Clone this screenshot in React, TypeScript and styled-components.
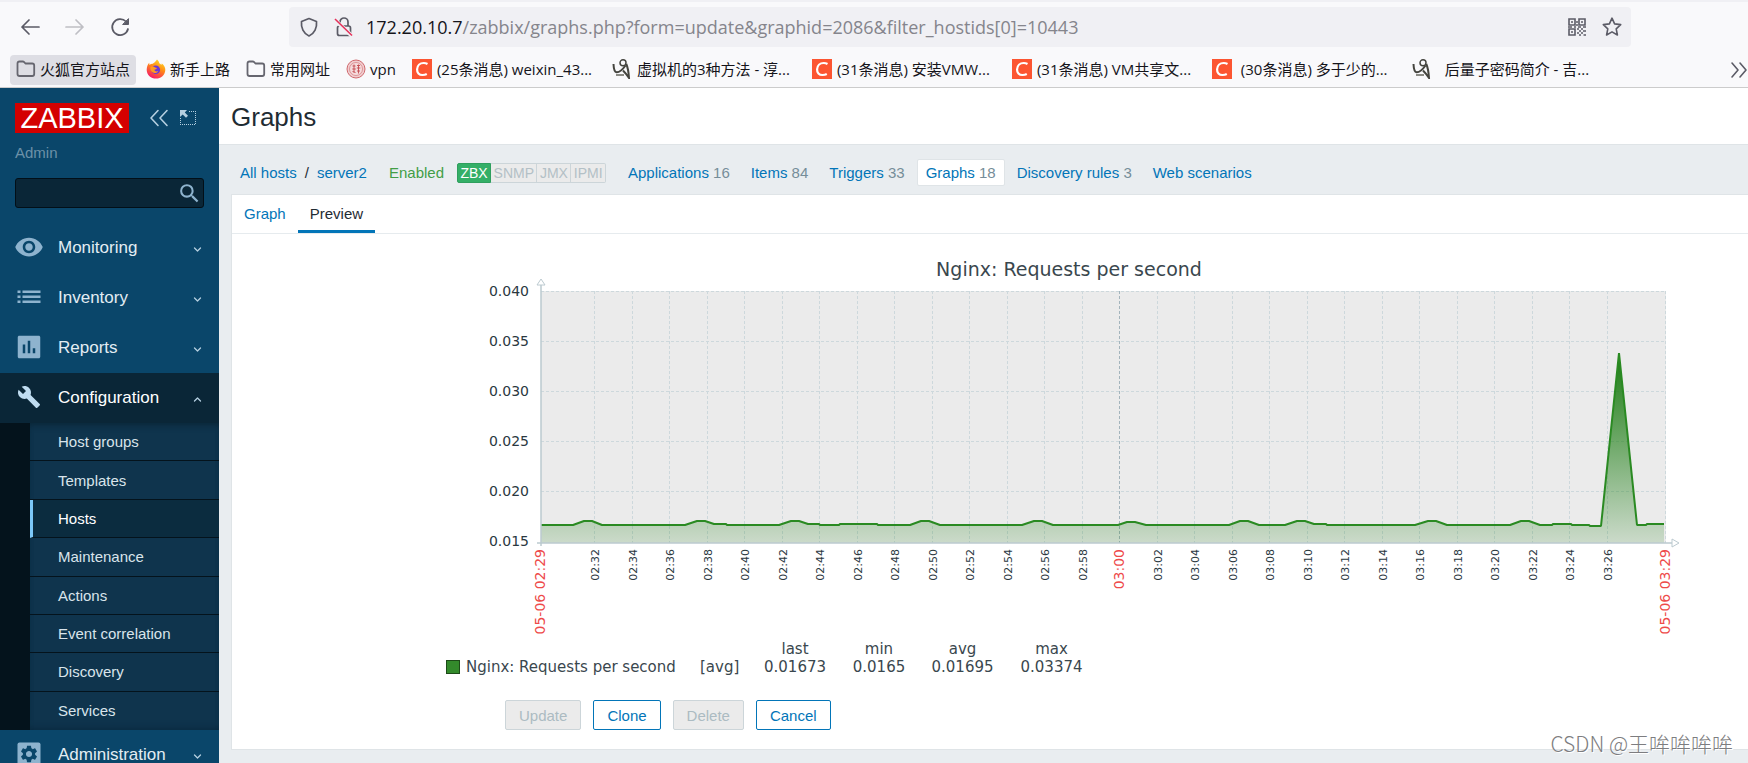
import React from 'react';
import styled, { createGlobalStyle, css } from 'styled-components';

const GlobalStyle = createGlobalStyle`
  *, *::before, *::after { box-sizing: border-box; }
  html, body { margin: 0; padding: 0; }
  body {
    font-family: "Liberation Sans", "Noto Sans CJK SC", sans-serif;
    font-size: 15px;
    color: #1f2c33;
    background: #e9edf0;
    overflow: hidden;
  }
  ul { list-style: none; margin: 0; padding: 0; }
  a { text-decoration: none; color: inherit; }
  button, input { font: inherit; }
  svg { display: block; flex: none; }
`;

const Window = styled.div`
  position: relative;
  height: 100vh;
  display: flex;
  flex-direction: column;
`;

/* ---------- browser chrome ---------- */

const Chrome = styled.header`
  flex: none;
  background: #f9f9fb;
  border-top: 2px solid #f0f0f4;
  border-bottom: 1px solid #ccc;
  font-family: "Open Sans", "Noto Sans CJK SC", sans-serif;
  color: #15141a;
`;

const Toolbar = styled.div`
  display: flex;
  align-items: center;
  padding: 5px 117px 8px 8px;
`;

const NavButtons = styled.div`
  display: flex;
  width: 281px;
  flex: none;
`;

const IconButton = styled.button<{ $faded?: boolean }>`
  display: flex;
  align-items: center;
  justify-content: center;
  width: 45px;
  height: 40px;
  padding: 0 2px 0 0;
  border: 0;
  background: none;
  color: ${(p) => (p.$faded ? '#bfbfc4' : '#5b5b66')};
`;

const UrlBar = styled.div`
  flex: 1;
  display: flex;
  align-items: center;
  height: 40px;
  padding: 0 9px 0 10px;
  border-radius: 4px;
  background: #f0f0f4;
  color: #5b5b66;
`;

const UrlText = styled.div`
  flex: 1;
  margin-left: 12px;
  font-size: 18px;
  line-height: 24px;
  white-space: nowrap;
  color: #85858c;
  b { font-weight: 400; color: #15141a; }
`;

const UrlIcons = styled.div<{ $gap: number }>`
  display: flex;
  align-items: center;
  gap: ${(p) => p.$gap}px;
`;

const Bookmarks = styled.nav`
  display: flex;
  align-items: center;
  gap: 4px;
  padding: 0 0 2px 10px;
`;

const Bookmark = styled.a<{ $active?: boolean; $wide?: boolean }>`
  display: flex;
  align-items: center;
  gap: 4px;
  flex: none;
  height: 30px;
  padding: 0 6px 2px;
  border-radius: 4px;
  font-size: 15px;
  line-height: 20px;
  white-space: pre;
  background: ${(p) => (p.$active ? '#dedee4' : 'transparent')};
  ${(p) => p.$wide && css`
    width: 196px;
    gap: 5px;
  `}
`;

const MoreBookmarks = styled.button`
  display: flex;
  margin-left: auto;
  padding: 0;
  border: 0;
  background: none;
  color: #5b5b66;
`;

const Csdn = styled.span`
  display: flex;
  align-items: center;
  justify-content: center;
  width: 20px;
  height: 20px;
  background: #fc5531;
`;

const Line = ({ d, w = 20, h = 20, sw = 2 }: { d: string; w?: number; h?: number; sw?: number }) => (
  <svg width={w} height={h} viewBox={`0 0 ${w} ${h}`} fill="none" stroke="currentColor" strokeWidth={sw} strokeLinecap="round" strokeLinejoin="round">
    <path d={d} />
  </svg>
);

const FolderIcon = () => (
  <svg width="20" height="20" viewBox="0 0 20 20" fill="none" stroke="#66666f" strokeWidth="1.8" strokeLinejoin="round">
    <path d="M1.5 15V4.5q0-2 2-2h3.2q.9 0 1.5.7l1.2 1.3h6.8q2 0 2 2V15q0 2-2 2h-12.700q-2 0-2-2z" />
  </svg>
);

const FirefoxIcon = () => (
  <svg width="20" height="20" viewBox="0 0 20 20">
    <defs>
      <linearGradient id="fox" x1="0.8" y1="0" x2="0.3" y2="1">
        <stop offset="0" stopColor="#ffe226" />
        <stop offset="0.45" stopColor="#ff8a16" />
        <stop offset="1" stopColor="#f5156c" />
      </linearGradient>
    </defs>
    <path d="M11 .5c1.500 1.200 2 2.500 2.300 3.800.8.300 1.500.900 2 1.700l.500-1.600C18 6 19.500 8.500 19.300 11c-.2 5-4.300 8.600-9.300 8.600S.8 16 .7 11C.7 8.300 1.500 5.500 3.200 3.800l.3 2.200c.8-.8 1.900-1.200 3.200-1.200C8 4 9.500 2.800 11 .5z" fill="url(#fox)" />
    <circle cx="9.800" cy="10.800" r="4.300" fill="#6a37d8" />
    <path d="M4.500 8c2-.9 3.500-.3 4.600.600L11 9c-.3 1.200-2 1.300-2.500 1.800-.1 1.500 2 2.200 3.800 1.200-1 2-3 2.500-4.800 1.700C5 12.800 4 10.500 4.500 8z" fill="#ff9a1f" />
  </svg>
);

const SealIcon = () => (
  <svg width="20" height="20" viewBox="0 0 20 20" fill="none" stroke="#d0696e">
    <circle cx="10" cy="10" r="9" strokeWidth="1" fill="#f0cdcf" />
    <circle cx="10" cy="10" r="6.500" strokeWidth=".6" fill="#f5dcdd" />
    <path d="M6.500 7h3M8 5.500v8M6.300 10h3.500M11 6.500h3M12.500 5.500v9M10.800 9h3.500M11 12h3M6.500 12.500l3 1" stroke="#c4484e" strokeWidth=".9" />
  </svg>
);

const CIcon = () => (
  <Csdn>
    <svg width="20" height="20" viewBox="0 0 20 20" fill="none" stroke="#fff" strokeWidth="2.200">
      <path d="M15.500 5c-1.200-.7-2.500-1-3.800-1C7.900 4 5.300 6.800 5.100 10.200c-.2 3.500 2 5.800 5.400 5.800 1.500 0 3-.3 4.300-1" />
    </svg>
  </Csdn>
);

const FigureIcon = () => (
  <svg width="20" height="20" viewBox="0 0 20 20" fill="none" stroke="#45453f">
    <circle cx="11" cy="3.800" r="3" strokeWidth="1.500" />
    <path d="M1.500 5c.2 5 1 8 3 8.300 3 .2 6-2.500 9-6.800" strokeWidth="2" />
    <path d="M14.300 5c1.300 3 2.300 8 2.700 14-2-3-4-5.500-6-7.500" strokeWidth="2" />
    <path d="M4 16h8" strokeWidth="2" stroke="#8b8b85" />
  </svg>
);

const QrIcon = () => (
  <svg width="18" height="18" viewBox="0 0 18 18" fill="none" stroke="#5b5b66" strokeWidth="1.600">
    <path d="M1 1h6v6H1zM11 1h6v6h-6zM1 11h6v6H1z" />
    <path d="M3 4h2M13 4h2M3 14h2M8 4h2M8 7h2M0 9h4M6 9h2M10 9h3M15 9h3M9 11h2M13 11h2M11 13h2M15 13h3M9 15h2M13 15h2M11 17h2M15.500 17h2.500" strokeWidth="1.700" />
  </svg>
);

const bookmarks: { icon: React.ReactNode; text: string; active?: boolean; wide?: boolean }[] = [
  { icon: <FolderIcon />, text: '火狐官方站点', active: true },
  { icon: <FirefoxIcon />, text: '新手上路' },
  { icon: <FolderIcon />, text: '常用网址' },
  { icon: <SealIcon />, text: 'vpn' },
  { icon: <CIcon />, text: '(25条消息) weixin_43...', wide: true },
  { icon: <FigureIcon />, text: '虚拟机的3种方法 - 淳...', wide: true },
  { icon: <CIcon />, text: '(31条消息) 安装VMW...', wide: true },
  { icon: <CIcon />, text: '(31条消息) VM共享文...', wide: true },
  { icon: <CIcon />, text: ' (30条消息) 多于少的...', wide: true },
  { icon: <FigureIcon />, text: '  后量子密码简介 - 吉...', wide: true },
];

/* ---------- sidebar ---------- */

const Workspace = styled.div`
  flex: 1;
  min-height: 0;
  display: flex;
  overflow: hidden;
`;

const Sidebar = styled.aside`
  flex: none;
  width: 219px;
  background: #0a466a;
  color: #e3edf3;
`;

const Brand = styled.div`
  display: flex;
  align-items: center;
  padding: 15px 0 0 15px;
`;

const Logo = styled.a`
  flex: none;
  width: 114px;
  height: 30px;
  margin-right: 20px;
  background: #d40000;
  color: #fff;
  font-size: 29px;
  line-height: 31px;
  text-align: center;
`;

const BrandButton = styled.button`
  display: flex;
  justify-content: center;
  width: 20px;
  margin-right: 9px;
  padding: 0;
  border: 0;
  background: none;
  color: #b5cfe0;
`;

const UserName = styled.div`
  padding: 10px 15px 0;
  line-height: 20px;
  color: #6c91a8;
`;

const SearchBox = styled.form`
  display: flex;
  align-items: center;
  height: 30px;
  margin: 15px 15px 15px;
  padding-right: 1px;
  border: 1px solid #020f18;
  border-radius: 3px;
  background: #0a2637;
  input {
    flex: 1;
    min-width: 0;
    height: 28px;
    padding: 0 6px;
    border: 0;
    outline: 0;
    background: none;
    color: #fff;
  }
  button {
    padding: 0;
    border: 0;
    background: none;
    color: #8eb3ce;
  }
`;

const MenuLink = styled.a<{ $open?: boolean }>`
  display: flex;
  align-items: center;
  height: 50px;
  padding-right: 17px;
  font-size: 17px;
  color: ${(p) => (p.$open ? '#fff' : '#e3edf3')};
  background: ${(p) => (p.$open ? '#0a2637' : 'transparent')};
`;

const MenuIcon = styled.span<{ $open?: boolean }>`
  display: flex;
  justify-content: center;
  width: 58px;
  padding-bottom: 3px;
  color: ${(p) => (p.$open ? '#bfdcf0' : '#8eb3ce')};
`;

const MenuLabel = styled.span`
  flex: 1;
`;

const Caret = styled.span`
  display: flex;
  padding-top: 3px;
  color: #b5cfe0;
`;

const Submenu = styled.ul`
  display: grid;
  grid-auto-rows: 1fr;
  height: 307px;
  border-left: 30px solid #04131c;
  background: #0f344d;
  box-shadow: inset 0 6px 6px -4px #0a2637, inset 0 -6px 6px -4px #0a2a40;
`;

const SubmenuItem = styled.li<{ $current?: boolean }>`
  display: flex;
  align-items: center;
  padding-left: ${(p) => (p.$current ? 25 : 28)}px;
  border-left: ${(p) => (p.$current ? '3px solid #7cc8f8' : '0')};
  background: ${(p) => (p.$current ? '#0b2c3f' : 'transparent')};
  color: ${(p) => (p.$current ? '#fff' : '#d9e4eb')};
  &:not(:last-child) { border-bottom: 1px solid #04131c; }
`;

const Fill = ({ d, size, vb = '0 0 24 24' }: { d: string; size: number; vb?: string }) => (
  <svg width={size} height={size} viewBox={vb} fill="currentColor">
    <path d={d} />
  </svg>
);

const GEAR =
  'M19.140 12.940c.04-.3.060-.61.060-.94 0-.32-.02-.64-.070-.94l2.030-1.580c.18-.14.230-.41.120-.61l-1.920-3.320c-.12-.22-.37-.29-.59-.22l-2.390.96c-.5-.38-1.030-.7-1.620-.94l-.36-2.540c-.04-.24-.24-.41-.48-.41h-3.840c-.24 0-.43.17-.47.41l-.36 2.540c-.59.24-1.130.57-1.620.94l-2.390-.96c-.22-.08-.47 0-.59.22L2.740 8.870c-.12.210-.080.47.120.61l2.030 1.580c-.050.3-.090.63-.090.94s.020.64.070.94l-2.030 1.580c-.18.14-.23.41-.12.61l1.920 3.320c.12.220.37.290.59.220l2.390-.96c.5.38 1.030.7 1.620.94l.36 2.540c.050.240.240.410.480.410h3.840c.240 0 .440-.170.470-.410l.360-2.540c.590-.240 1.130-.560 1.620-.940l2.390.960c.220.080.470 0 .590-.220l1.920-3.320c.120-.220.070-.470-.120-.610l-2.010-1.580zM12 15.600c-1.980 0-3.600-1.620-3.600-3.600s1.620-3.600 3.600-3.600 3.600 1.620 3.600 3.600-1.620 3.600-3.600 3.600z';

const menuTop = [
  {
    label: 'Monitoring',
    icon: <Fill size={30} d="M12 4.500C7 4.500 2.730 7.610 1 12c1.730 4.390 6 7.500 11 7.500s9.270-3.110 11-7.500c-1.730-4.390-6-7.500-11-7.500zM12 17c-2.760 0-5-2.240-5-5s2.240-5 5-5 5 2.240 5 5-2.240 5-5 5zm0-8c-1.660 0-3 1.340-3 3s1.340 3 3 3 3-1.340 3-3-1.340-3-3-3z" />,
  },
  {
    label: 'Inventory',
    icon: <Fill size={24} d="M.500 5.500h3v2.500h-3zM5.500 5.500h18v2.500h-18zM.500 10.500h3v2.500h-3zM5.500 10.500h18v2.500h-18zM.500 15.500h3v2.500h-3zM5.500 15.500h18v2.500h-18z" />,
  },
  {
    label: 'Reports',
    icon: <Fill size={30} d="M19.800 3H4.200C3.500 3 3 3.500 3 4.200v15.600c0 .7.500 1.200 1.200 1.200h15.600c.7 0 1.200-.5 1.200-1.200V4.200c0-.7-.5-1.200-1.200-1.200zM9 17H7v-7h2v7zm4 0h-2V7h2v10zm4 0h-2v-4h2v4z" />,
  },
];

const submenu = ['Host groups', 'Templates', 'Hosts', 'Maintenance', 'Actions', 'Event correlation', 'Discovery', 'Services'];

const Down = () => <Caret><Line d="M1.500 3 4.500 6 7.500 3" w={9} h={9} sw={1.300} /></Caret>;
const Up = () => <Caret><Line d="M1.500 6 4.500 3 7.500 6" w={9} h={9} sw={1.300} /></Caret>;

/* ---------- main area ---------- */

const Main = styled.main`
  flex: 1;
  min-width: 0;
`;

const PageTitle = styled.h1`
  margin: 0;
  height: 57px;
  padding-left: 12px;
  border-bottom: 1px solid #dfe4e7;
  background: #fff;
  font-size: 26px;
  font-weight: 400;
  line-height: 59px;
`;

const HostNav = styled.nav`
  display: flex;
  align-items: center;
  height: 49px;
  padding: 6px 0 0 21px;
  white-space: nowrap;
  color: #0275b8;
`;

const Crumbs = styled.div`
  display: flex;
  gap: 8px;
  width: 149px;
  span { color: #1f2c33; }
`;

const Status = styled.span`
  width: 68px;
  color: #429e47;
`;

const Interfaces = styled.div`
  display: flex;
  width: 149px;
  height: 20px;
  margin-right: 13px;
`;

const Interface = styled.span<{ $on?: boolean }>`
  flex: auto;
  border: 1px solid ${(p) => (p.$on ? '#2f9f5e' : '#ccd5d9')};
  border-left-width: ${(p) => (p.$on ? 1 : 0)}px;
  background: ${(p) => (p.$on ? '#34af67' : '#ebebeb')};
  color: ${(p) => (p.$on ? '#fff' : '#b3c0c6')};
  font-size: 14px;
  line-height: 18px;
  text-align: center;
  &:first-child { border-radius: 2px 0 0 2px; }
  &:last-child { border-radius: 0 2px 2px 0; }
`;

const HostTabs = styled.div`
  display: flex;
  gap: 3px;
`;

const HostTab = styled.a<{ $active?: boolean }>`
  height: 27px;
  padding: 0 8px;
  border: 1px solid ${(p) => (p.$active ? '#dfe4e7' : 'transparent')};
  border-radius: 2px;
  background: ${(p) => (p.$active ? '#fff' : 'transparent')};
  line-height: 25px;
  sup {
    font-size: inherit;
    line-height: inherit;
    vertical-align: baseline;
    color: #768d99;
  }
`;

const Panel = styled.section`
  margin-left: 12px;
  border: 1px solid #dfe4e7;
  border-right: 0;
  background: #fff;
`;

const Tabs = styled.div`
  display: flex;
  height: 39px;
  border-bottom: 1px solid #e6ebee;
`;

const Tab = styled.a<{ $active?: boolean }>`
  padding: 0 12px;
  line-height: 37px;
  color: ${(p) => (p.$active ? '#1f2c33' : '#0275b8')};
  border-bottom: 3px solid ${(p) => (p.$active ? '#0275b8' : 'transparent')};
`;

const Figure = styled.figure`
  margin: 0 0 0 214px;
  padding-top: 6px;
  font-family: "DejaVu Sans", sans-serif;
  color: #3a474e;
`;

const Legend = styled.table`
  border-collapse: collapse;
  table-layout: fixed;
  width: 656px;
  margin-top: 2px;
  font-size: 15px;
  line-height: 18px;
  th, td {
    padding: 0;
    font-weight: 400;
    text-align: center;
    white-space: nowrap;
  }
  td:nth-child(2), tbody th { text-align: left; }
`;

const Swatch = styled.span`
  display: inline-block;
  width: 14px;
  height: 14px;
  margin-right: 6px;
  vertical-align: -2px;
  border: 1px solid #1d4a18;
  background: #338a2b;
`;

const Actions = styled.div`
  display: flex;
  gap: 12px;
  padding: 24px 0 19px 273px;
`;

const Button = styled.button`
  height: 30px;
  padding: 0 13px;
  border: 1px solid #0275b8;
  border-radius: 2px;
  background: #fff;
  color: #0275b8;
  &:disabled {
    border-color: #ccd5d9;
    background: #ebebeb;
    color: #acbbc2;
  }
`;

const Watermark = styled.div`
  position: absolute;
  right: 15px;
  bottom: 5px;
  font-family: "Noto Sans CJK SC", sans-serif;
  font-size: 21px;
  font-weight: 300;
  line-height: 30px;
  color: #7d7d80;
  text-shadow: 1px 1px 0 #fff;
`;

/* ---------- chart ---------- */

const LEFT = 95;
const RIGHT = 1220;
const TOP = 51;
const BOTTOM = 303;

const yLabels = ['0.040', '0.035', '0.030', '0.025', '0.020', '0.015'];
const ticks = Array.from({ length: 28 }, (_, i) => {
  const minutes = 152 + i * 2;
  return {
    x: Math.round(149 + i * 37.5),
    label: `0${Math.floor(minutes / 60)}:${String(minutes % 60).padStart(2, '0')}`,
    hour: minutes % 60 === 0,
  };
});

/* each bump: start, peak, end and height above the resting level */
const bumps: [number, number, number, number][] = [
  [127, 142, 156, 4],
  [239, 255, 281, 4],
  [333, 349, 374, 4],
  [464, 479, 494, 4],
  [576, 592, 607, 4],
  [672, 685, 700, 3],
  [783, 798, 813, 4],
  [839, 855, 881, 4],
  [969, 986, 1001, 4],
  [1064, 1079, 1094, 4],
];
const REST = 285;
const bumpPath = ([a, p, b, h]: [number, number, number, number]) =>
  b - p > 20
    ? `L${a} ${REST} L${p - 4} ${REST - h} L${p + 4} ${REST - h} L${p + 13} ${REST - 1} L${b - 1} ${REST - 1} L${b} ${REST}`
    : `L${a} ${REST} L${p - 4} ${REST - h} L${p + 4} ${REST - h} L${b} ${REST}`;
const linePath = [
  `M${LEFT} ${REST}`,
  ...bumps.slice(0, 3).map(bumpPath),
  `L393 ${REST} L394 ${REST - 1} L431 ${REST - 1} L432 ${REST}`,
  ...bumps.slice(3).map(bumpPath),
  `L1106 ${REST} L1107 ${REST - 1} L1125 ${REST - 1} L1126 ${REST} L1143 ${REST} L1144 286 L1155 286`,
  `L1173 113 L1191 ${REST} L1200 ${REST} L1201 ${REST - 1} L1218 ${REST - 1}`,
].join(' ');

const VLabel = ({ x, text, major }: { x: number; text: string; major?: boolean }) => (
  <text
    transform={`translate(${x} 309) rotate(-90)`}
    textAnchor="end"
    fontSize={major ? 14 : 11}
    fill={major ? '#ee4a4a' : '#2b383f'}
  >
    {text}
  </text>
);

const Chart = () => (
  <svg width="1240" height="398" viewBox="0 0 1240 398" fontFamily='"DejaVu Sans", sans-serif' role="img" aria-label="Nginx: Requests per second">
    <defs>
      <linearGradient id="area" gradientUnits="userSpaceOnUse" x1="0" y1="113" x2="0" y2={BOTTOM}>
        <stop offset="0" stopColor="#1a7c11" />
        <stop offset="1" stopColor="#1a7c11" stopOpacity="0.15" />
      </linearGradient>
    </defs>
    <text x="623" y="36" textAnchor="middle" fontSize="19" fill="#3a474e">Nginx: Requests per second</text>
    <rect x={LEFT} y={TOP} width={RIGHT - LEFT} height={BOTTOM - TOP} fill="#ebebeb" />
    <g stroke="#cdd8dc" strokeWidth="1" strokeDasharray="3 2">
      {yLabels.slice(0, 5).map((l, i) => (
        <path key={l} d={`M${LEFT} ${TOP + 0.5 + i * 50}H${RIGHT}`} />
      ))}
      {ticks.map((t) => (
        <path key={t.label} d={`M${t.x - 0.5} ${TOP}V${BOTTOM}`} stroke={t.hour ? '#a3b4bc' : undefined} />
      ))}
      <path d={`M${RIGHT - 0.5} ${TOP}V${BOTTOM}`} />
    </g>
    <path d={`${linePath} V${BOTTOM} H${LEFT} Z`} fill="url(#area)" />
    <path d={linePath} fill="none" stroke="#2a8a22" strokeWidth="2" strokeLinejoin="bevel" />
    <g stroke="#bccad0" fill="#fff">
      <path d={`M${LEFT} 45V306M${LEFT - 4} ${BOTTOM}H1227`} strokeWidth="1.500" />
      <path d={`M${LEFT - 4} 45H${LEFT + 4}L${LEFT} 39Z`} />
      <path d={`M1226 ${BOTTOM - 4}V${BOTTOM + 4}L1233 ${BOTTOM}Z`} />
    </g>
    {yLabels.map((l, i) => (
      <text key={l} x="83" y={56 + i * 50} textAnchor="end" fontSize="14" fill="#2b383f">{l}</text>
    ))}
    {ticks.map((t) => (
      <VLabel key={t.label} x={t.x + 4} text={t.label} major={t.hour} />
    ))}
    <VLabel x={99} text="05-06 02:29" major />
    <VLabel x={1224} text="05-06 03:29" major />
  </svg>
);

const hostTabs: { label: string; count?: number; active?: boolean }[] = [
  { label: 'Applications', count: 16 },
  { label: 'Items', count: 84 },
  { label: 'Triggers', count: 33 },
  { label: 'Graphs', count: 18, active: true },
  { label: 'Discovery rules', count: 3 },
  { label: 'Web scenarios' },
];

export default function App() {
  return (
    <Window>
      <GlobalStyle />
      <Chrome>
        <Toolbar>
          <NavButtons>
            <IconButton aria-label="Back"><Line d="M19 10H2M9 3 2 10l7 7" sw={1.700} /></IconButton>
            <IconButton aria-label="Forward" $faded><Line d="M1 10h17M11 3l7 7-7 7" sw={1.700} /></IconButton>
            <IconButton aria-label="Reload">
              <svg width="20" height="20" viewBox="0 0 20 20" fill="none" stroke="currentColor" strokeWidth="1.800" strokeLinecap="round">
                <path d="M18 12a8 8 0 1 1-2-7.500" />
                <path d="M18.500 2v5.500H13z" fill="currentColor" strokeWidth="1" strokeLinejoin="round" />
              </svg>
            </IconButton>
          </NavButtons>
          <UrlBar>
            <UrlIcons $gap={15}>
              <Line d="M10 1.500 17.500 4.500c.7 6-2 12-7.500 14.500C4.500 16.500 1.800 10.500 2.500 4.500z" sw={1.700} />
              <svg width="20" height="20" viewBox="0 0 20 20" fill="none" stroke="currentColor" strokeWidth="1.700">
                <path d="M6 9V5a4 4 0 0 1 8 0v4" />
                <rect x="3.500" y="9" width="13" height="9.500" rx="2" />
                <path d="M1 3l17 16" stroke="#f0f0f4" strokeWidth="4" />
                <path d="M1 2l17 16.500" stroke="#e5315a" strokeWidth="1.600" />
              </svg>
            </UrlIcons>
            <UrlText role="textbox" aria-label="Address">
              <b>172.20.10.7</b>/zabbix/graphs.php?form=update&amp;graphid=2086&amp;filter_hostids[0]=10443
            </UrlText>
            <UrlIcons $gap={16}>
              <QrIcon />
              <Line d="M10 1.200l2.600 5.700 6.100.7-4.500 4.200 1.200 6.200L10 14.900 4.600 18l1.200-6.200L1.300 7.600l6.100-.7z" sw={1.600} />
            </UrlIcons>
          </UrlBar>
        </Toolbar>
        <Bookmarks>
          {bookmarks.map((b) => (
            <Bookmark key={b.text} href="#" $active={b.active} $wide={b.wide}>
              {b.icon}
              {b.text}
            </Bookmark>
          ))}
          <MoreBookmarks aria-label="More bookmarks"><Line d="M2 3l6 7-6 7M10 3l6 7-6 7" w={18} sw={1.600} /></MoreBookmarks>
        </Bookmarks>
      </Chrome>

      <Workspace>
        <Sidebar>
          <Brand>
            <Logo href="#">ZABBIX</Logo>
            <BrandButton aria-label="Collapse sidebar"><Line d="M9 2.500 2 10l7 7.500M18 2.500 11 10l7 7.500" sw={1.600} /></BrandButton>
            <BrandButton aria-label="Hide sidebar">
              <svg width="16" height="16" viewBox="0 0 16 16" fill="none" stroke="currentColor">
                <path d="M9 1.500h7M15.500 1v14M15 14.500H1M.500 15V8" strokeDasharray="1 1" />
                <path d="M0 0h7L4.800 2.500 8 5.700 6 7.700 2.700 4.500 0 7z" fill="currentColor" stroke="none" />
              </svg>
            </BrandButton>
          </Brand>
          <UserName>Admin</UserName>
          <SearchBox>
            <input type="text" aria-label="Search" />
            <button type="button" aria-label="Search">
              <Fill size={25} d="M15.500 14h-.79l-.28-.27A6.471 6.471 0 0 0 16 9.500 6.500 6.500 0 1 0 9.500 16c1.610 0 3.090-.59 4.230-1.570l.27.280v.79l5 4.990L20.490 19l-4.990-5zm-6 0C7.010 14 5 11.990 5 9.500S7.010 5 9.500 5 14 7.010 14 9.500 11.990 14 9.500 14z" />
            </button>
          </SearchBox>
          <nav>
            {menuTop.map((m) => (
              <MenuLink key={m.label} href="#">
                <MenuIcon>{m.icon}</MenuIcon>
                <MenuLabel>{m.label}</MenuLabel>
                <Down />
              </MenuLink>
            ))}
            <MenuLink href="#" $open>
              <MenuIcon $open>
                <Fill size={24} d="M22.700 19l-9.100-9.100c.9-2.300.4-5-1.500-6.900-2-2-5-2.400-7.400-1.300L9 6 6 9 1.600 4.700C.4 7.100.9 10.100 2.900 12.100c1.900 1.900 4.600 2.400 6.900 1.500l9.100 9.100c.4.4 1 .4 1.400 0l2.300-2.300c.5-.4.5-1.100.1-1.400z" />
              </MenuIcon>
              <MenuLabel>Configuration</MenuLabel>
              <Up />
            </MenuLink>
            <Submenu>
              {submenu.map((s) => (
                <SubmenuItem key={s} $current={s === 'Hosts'}><a href="#">{s}</a></SubmenuItem>
              ))}
            </Submenu>
            <MenuLink href="#">
              <MenuIcon>
                <svg width="24" height="24" viewBox="0 0 24 24">
                  <rect x=".5" y=".5" width="23" height="23" rx="2" fill="currentColor" />
                  <g transform="translate(1.800 1.800) scale(.85)"><path d={GEAR} fill="#0a466a" /></g>
                </svg>
              </MenuIcon>
              <MenuLabel>Administration</MenuLabel>
              <Down />
            </MenuLink>
          </nav>
        </Sidebar>

        <Main>
          <PageTitle>Graphs</PageTitle>
          <HostNav>
            <Crumbs>
              <a href="#">All hosts</a>
              <span>/</span>
              <a href="#">server2</a>
            </Crumbs>
            <Status>Enabled</Status>
            <Interfaces>
              <Interface $on>ZBX</Interface>
              <Interface>SNMP</Interface>
              <Interface>JMX</Interface>
              <Interface>IPMI</Interface>
            </Interfaces>
            <HostTabs>
              {hostTabs.map((t) => (
                <HostTab key={t.label} href="#" $active={t.active}>
                  {t.label}
                  {t.count !== undefined && <sup> {t.count}</sup>}
                </HostTab>
              ))}
            </HostTabs>
          </HostNav>
          <Panel>
            <Tabs>
              <Tab href="#">Graph</Tab>
              <Tab href="#" $active>Preview</Tab>
            </Tabs>
            <Figure>
              <Chart />
              <Legend>
                <colgroup>
                  <col width="254" />
                  <col width="56" />
                  <col width="78" />
                  <col width="90" />
                  <col width="77" />
                  <col width="101" />
                </colgroup>
                <thead>
                  <tr>
                    <td />
                    <td />
                    <th scope="col">last</th>
                    <th scope="col">min</th>
                    <th scope="col">avg</th>
                    <th scope="col">max</th>
                  </tr>
                </thead>
                <tbody>
                  <tr>
                    <th scope="row"><Swatch />Nginx: Requests per second</th>
                    <td>[avg]</td>
                    <td>0.01673</td>
                    <td>0.0165</td>
                    <td>0.01695</td>
                    <td>0.03374</td>
                  </tr>
                </tbody>
              </Legend>
            </Figure>
            <Actions>
              <Button disabled>Update</Button>
              <Button>Clone</Button>
              <Button disabled>Delete</Button>
              <Button>Cancel</Button>
            </Actions>
          </Panel>
        </Main>
      </Workspace>
      <Watermark>CSDN @王哞哞哞哞</Watermark>
    </Window>
  );
}
